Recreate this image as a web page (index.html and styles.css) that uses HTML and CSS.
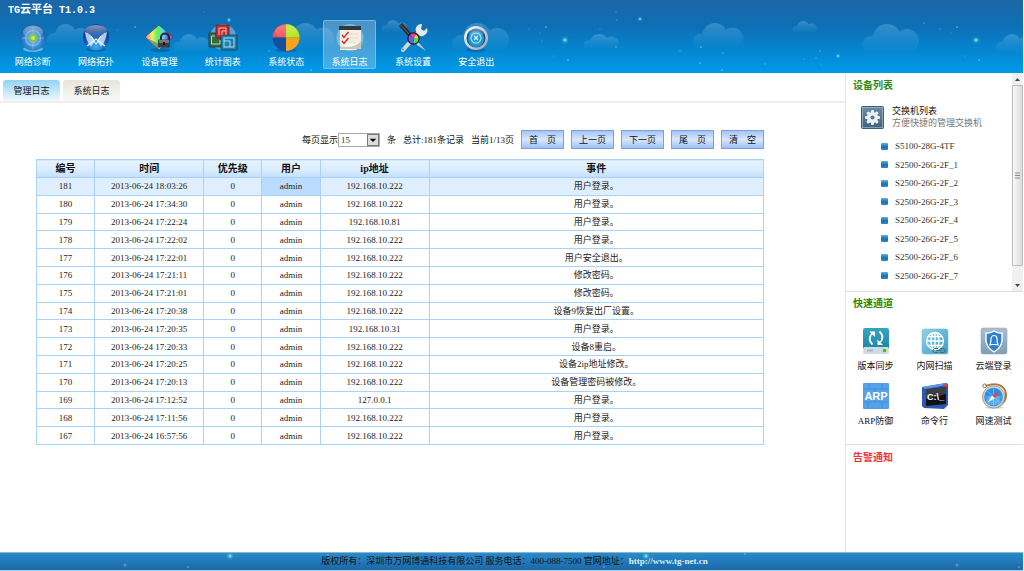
FILE: index.html
```html
<!DOCTYPE html>
<html lang="zh-CN">
<head>
<meta charset="utf-8">
<title>TG云平台</title>
<link rel="stylesheet" href="styles.css">
</head>
<body>
<svg class="defs" aria-hidden="true">
  <defs>
    <linearGradient id="gCloud" x1="0" y1="0" x2="0" y2="1"><stop offset="0" stop-color="#8cc8f0" stop-opacity=".34"/><stop offset=".9" stop-color="#6cc0f4" stop-opacity="0"/></linearGradient>
    <radialGradient id="gGlow"><stop offset="0" stop-color="#7cf0ec"/><stop offset=".3" stop-color="#3ccbe8" stop-opacity=".6"/><stop offset="1" stop-color="#3ccbe8" stop-opacity="0"/></radialGradient>
    <radialGradient id="gBall" cx=".5" cy=".6" r=".6"><stop offset="0" stop-color="#7fc6ee"/><stop offset=".6" stop-color="#2f80cc"/><stop offset="1" stop-color="#1a569c"/></radialGradient>
    <radialGradient id="gDeep" cx=".5" cy=".85" r=".8"><stop offset="0" stop-color="#39b0f4"/><stop offset=".55" stop-color="#1257b8"/><stop offset="1" stop-color="#0a2a72"/></radialGradient>
    <linearGradient id="gShine" x1="0" y1="0" x2="0" y2="1"><stop offset="0" stop-color="#fff" stop-opacity=".75"/><stop offset="1" stop-color="#fff" stop-opacity=".05"/></linearGradient>
    <linearGradient id="gRainbow" x1="0" y1="0" x2="1" y2="0"><stop offset="0" stop-color="#f46ad0"/><stop offset=".25" stop-color="#f0f060"/><stop offset=".45" stop-color="#5ef060"/><stop offset=".65" stop-color="#58d8f4"/><stop offset=".8" stop-color="#6a5cf0"/><stop offset="1" stop-color="#f03c9c"/></linearGradient>
    <linearGradient id="gTeal" x1="0" y1="0" x2="0" y2="1"><stop offset="0" stop-color="#35a5c6"/><stop offset="1" stop-color="#1c86a8"/></linearGradient>
    <linearGradient id="gSky" x1="0" y1="0" x2="1" y2="1"><stop offset="0" stop-color="#8fd4ec"/><stop offset="1" stop-color="#3a9cc4"/></linearGradient>
    <linearGradient id="gSteel" x1="0" y1="0" x2="0" y2="1"><stop offset="0" stop-color="#6f8ba3"/><stop offset="1" stop-color="#3f617c"/></linearGradient>
    <linearGradient id="gSilver" x1="0" y1="0" x2="0" y2="1"><stop offset="0" stop-color="#a9bfcf"/><stop offset="1" stop-color="#7f9db3"/></linearGradient>
    <linearGradient id="gMetal" x1="0" y1="0" x2="1" y2="1"><stop offset="0" stop-color="#fff"/><stop offset="1" stop-color="#9aa3ab"/></linearGradient>
    <path id="cloud" d="M1 21a9 9 0 0 1 18 0a9 9 0 0 1-18 0ZM12 14a14 14 0 0 1 28 0a14 14 0 0 1-28 0ZM34 17a12 12 0 0 1 24 0a12 12 0 0 1-24 0ZM8 18H50V32H8Z" fill="url(#gCloud)"/>
    <g id="star"><circle r="4" fill="url(#gGlow)"/><path d="M0-1.500V1.500M-1.500 0H1.500" stroke="#b4f8f0" stroke-width=".7" opacity=".8"/></g>
  </defs>
</svg>

<header class="top">
  <svg class="sky" viewBox="0 0 1024 73" preserveAspectRatio="xMinYMin slice" aria-hidden="true">
    <use href="#cloud" transform="translate(46 24) scale(.75)"/>
    <use href="#cloud" transform="translate(172 34) scale(.65)"/>
    <use href="#cloud" transform="translate(282 23) scale(.9)"/>
    <use href="#cloud" transform="translate(381 20) scale(.45)"/>
    <use href="#cloud" transform="translate(451 23) scale(1)"/>
    <use href="#cloud" transform="translate(583 34) scale(.62 .52)"/>
    <use href="#cloud" transform="translate(692 23) scale(.88)"/>
    <use href="#cloud" transform="translate(792 21) scale(.43)"/>
    <use href="#cloud" transform="translate(861 24) scale(1)"/>
    <use href="#cloud" transform="translate(995 34) scale(.65)"/>
    <use href="#star" x="565" y="40"/><use href="#star" x="976" y="40"/>
    <use href="#star" transform="translate(229 20) scale(.7)"/><use href="#star" transform="translate(640 19) scale(.7)"/>
    <use href="#star" transform="translate(838 56) scale(.7)"/><use href="#star" transform="translate(428 58) scale(.7)"/>
    <g fill="#8fd6f4" opacity=".55">
      <circle cx="135" cy="27" r=".9"/><circle cx="117" cy="30" r=".6"/><circle cx="204" cy="12" r=".6"/><circle cx="269" cy="51" r=".8"/><circle cx="311" cy="70" r=".9"/>
      <circle cx="546" cy="27" r=".9"/><circle cx="529" cy="29" r=".6"/><circle cx="540" cy="33" r=".6"/><circle cx="542" cy="41" r=".6"/><circle cx="568" cy="60" r="1"/><circle cx="554" cy="56" r=".6"/>
      <circle cx="616" cy="12" r=".7"/><circle cx="617" cy="20" r=".7"/><circle cx="600" cy="29" r=".6"/><circle cx="616" cy="47" r=".8"/><circle cx="680" cy="51" r=".7"/><circle cx="701" cy="47" r=".9"/><circle cx="700" cy="63" r=".9"/><circle cx="723" cy="53" r=".8"/><circle cx="722" cy="70" r=".9"/>
      <circle cx="765" cy="64" r=".7"/><circle cx="820" cy="51" r=".8"/><circle cx="804" cy="59" r=".7"/><circle cx="816" cy="58" r=".7"/><circle cx="821" cy="65" r=".6"/>
      <circle cx="924" cy="23" r=".8"/><circle cx="940" cy="29" r=".7"/><circle cx="957" cy="27" r=".9"/><circle cx="951" cy="33" r=".6"/><circle cx="979" cy="60" r=".9"/><circle cx="965" cy="56" r=".6"/>
    </g>
  </svg>
  <h1 class="brand"><span class="latin">TG</span>云平台<span class="latin"> T1.0.3</span></h1>
  <nav class="nav">
    <a class="nav-item" href="#">
      <svg viewBox="0 0 28 28"><ellipse cx="14" cy="25" rx="10" ry="3" fill="#7fc0ea" opacity=".8"/><circle cx="14" cy="13.500" r="13" fill="url(#gBall)"/><ellipse cx="14" cy="8" rx="10" ry="6.500" fill="url(#gShine)" opacity=".6"/><circle cx="14" cy="14" r="7.500" fill="none" stroke="#a9d0e4" stroke-width="1.200" opacity=".6"/><path d="M14 3V25M3 14H25" stroke="#a9d0e4" opacity=".5"/><circle cx="14" cy="14" r="4" fill="#8cc63a"/><circle cx="14" cy="14" r="2" fill="#c8e860"/></svg>
      <span>网络诊断</span></a>
    <a class="nav-item" href="#">
      <svg viewBox="0 0 28 28"><ellipse cx="14" cy="25.500" rx="10" ry="2" fill="#0a4f94" opacity=".6"/><circle cx="14" cy="13.500" r="13" fill="url(#gDeep)"/><ellipse cx="14" cy="7" rx="11" ry="6" fill="url(#gShine)" opacity=".7"/><path d="M3 8Q9 10 13 17L9 23Q4 17 3 8ZM25 8Q19 10 15 17L19 23Q24 17 25 8Z" fill="#cfe2f2" opacity=".85"/><path d="M5 22L14 15L23 22M9 12L14 20L19 12" fill="none" stroke="#eef6fc" stroke-width="1.100"/></svg>
      <span>网络拓扑</span></a>
    <a class="nav-item" href="#">
      <svg viewBox="0 0 28 28"><ellipse cx="15" cy="26" rx="10" ry="2" fill="#0a4f94" opacity=".5"/><path d="M14 1L28 13L14 26L0 13Z" fill="url(#gRainbow)" stroke="#444b54" stroke-width=".8"/><path d="M2 14L14 26L14 20Z" fill="#68707c" opacity=".65"/><path d="M16 16V13.500a4 4 0 0 1 8 0V16" fill="none" stroke="#28282c" stroke-width="2"/><rect x="13" y="15.500" width="12" height="8" rx="1" fill="#3c3c42"/><rect x="14" y="16" width="10" height="3" fill="#77777e"/><path d="M19 18v3" stroke="#000" stroke-width="1.500"/></svg>
      <span>设备管理</span></a>
    <a class="nav-item" href="#">
      <svg viewBox="0 0 28 28"><circle cx="14" cy="13" r="13" fill="#a8d0ec" opacity=".5"/><g stroke="#1c2c30" stroke-width=".7"><rect x="0" y="9" width="14" height="14" rx="1" fill="#356c3e"/><rect x="7" y="1" width="13" height="13" rx="1" fill="#d8261e"/><rect x="12" y="11" width="16" height="15" rx="1" fill="#1882b8"/></g><g fill="none" stroke="#d6e8ea" stroke-width="1" opacity=".85"><path d="M2.500 20V12H6M2.500 20H11V16"/><path d="M10 11V4H17V11M13 11V7H17"/><rect x="15" y="14" width="10" height="9"/><path d="M15 17H21V23"/></g></svg>
      <span>统计图表</span></a>
    <a class="nav-item" href="#">
      <svg viewBox="0 0 28 28"><ellipse cx="14" cy="26" rx="11" ry="2" fill="#0a4f94" opacity=".5"/><path d="M14 13.500V0A13.500 13.500 0 0 0 .5 13.500Z" fill="#f2525c"/><path d="M14 13.500V0A13.500 13.500 0 0 1 27.500 13.500Z" fill="#b6e61c"/><path d="M14 13.500V27A13.500 13.500 0 0 1 .5 13.500Z" fill="#14509e"/><path d="M14 13.500V27A13.500 13.500 0 0 0 27.500 13.500Z" fill="#f6a41e"/><ellipse cx="14" cy="7.500" rx="11" ry="6.500" fill="url(#gShine)" opacity=".35"/></svg>
      <span>系统状态</span></a>
    <a class="nav-item active" href="#">
      <svg viewBox="0 0 28 28"><circle cx="14" cy="13.500" r="13.500" fill="#8fcbe6" opacity=".7"/><path d="M4 5H25V21L20 26H4Z" fill="#f4efe2"/><path d="M4 22Q17 25 25 17V25H4Z" fill="#cfc8b8"/><path d="M4 22Q17 25 25 17L20 20Z" fill="#fff"/><rect x="3" y="2" width="22" height="4" fill="#33383e"/><path d="M13 10H22M13 14H22M13 18H19" stroke="#e2dccb"/><path d="M6 11L8 13.500L12.500 8M6 17L8 19.500L12.500 14" fill="none" stroke="#d8281e" stroke-width="1.400"/></svg>
      <span>系统日志</span></a>
    <a class="nav-item" href="#">
      <svg viewBox="0 0 28 28"><path d="M4 26L20 8" stroke="#d4d8dc" stroke-width="4" stroke-linecap="round"/><path d="M18 9a5.500 5.500 0 0 1 5-9l-1 5 3 2 3-3a6 6 0 0 1-7 8Z" fill="#e8ebee"/><path d="M0 2L3-1L13 10L10 13Z" fill="#28292c"/><path d="M1.500.8L11.500 11.500" stroke="#6d7074"/><path d="M15 15L20 19L27 27L18 21Z" fill="#c4ccd4"/><circle cx="4" cy="25.500" r="1" fill="#67829a"/><circle cx="14.500" cy="14.500" r="6.200" fill="#1d1d20"/><path d="M14.500 14.500L11 11A5 5 0 0 1 17 10.500Z" fill="#f43c9c"/><path d="M14.500 14.500L17 10.500A5 5 0 0 1 19.500 15Z" fill="#f4d238"/><path d="M14.500 14.500L19.500 15A5 5 0 0 1 15 19.500Z" fill="#3ce070"/><path d="M14.500 14.500L15 19.500A5 5 0 0 1 11 11Z" fill="#6a5cf0"/></svg>
      <span>系统设置</span></a>
    <a class="nav-item" href="#">
      <svg viewBox="0 0 28 28"><ellipse cx="14" cy="26" rx="10" ry="2" fill="#0a4f94" opacity=".5"/><circle cx="14" cy="14" r="12" fill="url(#gMetal)"/><circle cx="14" cy="14" r="9.500" fill="#0e4f92"/><circle cx="14" cy="15" r="8" fill="#2496d2"/><ellipse cx="14" cy="9" rx="7.500" ry="4.500" fill="url(#gShine)" opacity=".5"/><circle cx="14" cy="14" r="5" fill="none" stroke="#a8ecff" stroke-width="1.100"/><path d="M12 12L16 16M16 12L12 16" stroke="#d8faff" stroke-width="1.200"/></svg>
      <span>安全退出</span></a>
  </nav>
</header>

<div class="body">
  <main class="main">
    <div class="tabs">
      <a class="tab current" href="#">管理日志</a>
      <a class="tab" href="#">系统日志</a>
    </div>
    <section class="content">
      <form class="pager">
        <label class="size"><span>每页显示</span>
          <span class="pick"><select><option>15</option><option>30</option></select>
            <svg class="drop" viewBox="0 0 12 12" aria-hidden="true"><path d="M2 4.500H10L6 8.500Z" fill="#000"/></svg></span>
        </label>
        <span>条</span><span>总计:181条记录</span><span>当前1/13页</span>
        <div class="buttons">
          <button type="button">首&emsp;页</button>
          <button type="button">上一页</button>
          <button type="button">下一页</button>
          <button type="button">尾&emsp;页</button>
          <button type="button">清&emsp;空</button>
        </div>
      </form>
      <table class="log">
        <thead><tr><th class="narrow">编号</th><th class="wide">时间</th><th class="narrow">优先级</th><th class="narrow">用户</th><th class="wide">ip地址</th><th>事件</th></tr></thead>
        <tbody>
          <tr class="hot"><td>181</td><td>2013-06-24 18:03:26</td><td>0</td><td class="hit">admin</td><td>192.168.10.222</td><td>用户登录。</td></tr>
          <tr><td>180</td><td>2013-06-24 17:34:30</td><td>0</td><td>admin</td><td>192.168.10.222</td><td>用户登录。</td></tr>
          <tr><td>179</td><td>2013-06-24 17:22:24</td><td>0</td><td>admin</td><td>192.168.10.81</td><td>用户登录。</td></tr>
          <tr><td>178</td><td>2013-06-24 17:22:02</td><td>0</td><td>admin</td><td>192.168.10.222</td><td>用户登录。</td></tr>
          <tr><td>177</td><td>2013-06-24 17:22:01</td><td>0</td><td>admin</td><td>192.168.10.222</td><td>用户安全退出。</td></tr>
          <tr><td>176</td><td>2013-06-24 17:21:11</td><td>0</td><td>admin</td><td>192.168.10.222</td><td>修改密码。</td></tr>
          <tr><td>175</td><td>2013-06-24 17:21:01</td><td>0</td><td>admin</td><td>192.168.10.222</td><td>修改密码。</td></tr>
          <tr><td>174</td><td>2013-06-24 17:20:38</td><td>0</td><td>admin</td><td>192.168.10.222</td><td>设备9恢复出厂设置。</td></tr>
          <tr><td>173</td><td>2013-06-24 17:20:35</td><td>0</td><td>admin</td><td>192.168.10.31</td><td>用户登录。</td></tr>
          <tr><td>172</td><td>2013-06-24 17:20:33</td><td>0</td><td>admin</td><td>192.168.10.222</td><td>设备8重启。</td></tr>
          <tr><td>171</td><td>2013-06-24 17:20:25</td><td>0</td><td>admin</td><td>192.168.10.222</td><td>设备2ip地址修改。</td></tr>
          <tr><td>170</td><td>2013-06-24 17:20:13</td><td>0</td><td>admin</td><td>192.168.10.222</td><td>设备管理密码被修改。</td></tr>
          <tr><td>169</td><td>2013-06-24 17:12:52</td><td>0</td><td>admin</td><td>127.0.0.1</td><td>用户登录。</td></tr>
          <tr><td>168</td><td>2013-06-24 17:11:56</td><td>0</td><td>admin</td><td>192.168.10.222</td><td>用户登录。</td></tr>
          <tr><td>167</td><td>2013-06-24 16:57:56</td><td>0</td><td>admin</td><td>192.168.10.222</td><td>用户登录。</td></tr>
        </tbody>
      </table>
    </section>
  </main>

  <aside class="side">
    <section class="devices">
      <div class="device-pane">
        <h2>设备列表</h2>
        <div class="group">
          <svg viewBox="0 0 23 23" aria-hidden="true"><rect x=".5" y=".5" width="22" height="22" rx="1" fill="url(#gSteel)" stroke="#3f5d78"/><rect x="1.500" y="1.500" width="20" height="20" fill="none" stroke="#a4bccd" opacity=".7"/><g fill="#e9f0f5"><circle cx="11.500" cy="11.500" r="5.500"/><g id="teeth"><rect x="10" y="4" width="3" height="15" rx="1"/><rect x="4" y="10" width="15" height="3" rx="1"/></g><use href="#teeth" transform="rotate(45 11.500 11.500)"/></g><circle cx="11.500" cy="11.500" r="2" fill="#59788f"/></svg>
          <p class="group-name">交换机列表</p>
          <p class="group-note">方便快捷的管理交换机</p>
        </div>
        <ul class="device-list">
          <li><a href="#">S5100-28G-4TF</a></li>
          <li><a href="#">S2500-26G-2F_1</a></li>
          <li><a href="#">S2500-26G-2F_2</a></li>
          <li><a href="#">S2500-26G-2F_3</a></li>
          <li><a href="#">S2500-26G-2F_4</a></li>
          <li><a href="#">S2500-26G-2F_5</a></li>
          <li><a href="#">S2500-26G-2F_6</a></li>
          <li><a href="#">S2500-26G-2F_7</a></li>
        </ul>
      </div>
      <div class="scroll" aria-hidden="true">
        <svg class="arrow" viewBox="0 0 11 12"><path d="M3 8H8L5.500 5Z" fill="#444"/></svg>
        <div class="thumb"><svg viewBox="0 0 5 7"><path d="M0 1H5M0 3.500H5M0 6H5" stroke="#888"/></svg></div>
        <svg class="arrow" viewBox="0 0 11 12"><path d="M3 5H8L5.500 8Z" fill="#444"/></svg>
      </div>
    </section>

    <section class="quick">
      <h2>快速通道</h2>
      <div class="tiles">
        <a class="tile" href="#"><svg viewBox="0 0 26 26"><rect width="26" height="21" rx="2" fill="url(#gTeal)"/><path d="M1 19H25L26 24a2 2 0 0 1-2 2H2a2 2 0 0 1-2-2Z" fill="#cfdbe2"/><path d="M5 21.500v2M7 21.500v2M9 21.500v2" stroke="#8195a3"/><circle cx="21.500" cy="22.500" r="1.800" fill="#4cb81e"/><path d="M9.500 16.500Q4 11 9 5.500M16.500 3.500Q22 9 17 14.500" fill="none" stroke="#fff" stroke-width="1.800"/><path d="M6.500 3.500H12V9ZM14.500 11.500V17H20Z" fill="#fff"/></svg><span>版本同步</span></a>
        <a class="tile" href="#"><svg viewBox="0 0 26 26"><rect y="1" width="26" height="25" rx="2" fill="url(#gSky)" stroke="#78bcd4" stroke-width=".6"/><g fill="none" stroke="#fff" stroke-width="1.300"><circle cx="13" cy="13" r="8.500"/><ellipse cx="13" cy="13" rx="4" ry="8.500"/><path d="M13 4.500V21.500M4.500 13H21.500M6 8.500H20M6 17.500H20"/></g><path d="M11 22.500a2 2 0 0 1 2-2h3M14 22.500h6M18 20.500h3a2 2 0 0 1 0 4h-3M16 24.500h-3a2 2 0 0 1-2-2" fill="none" stroke="#55646c" stroke-width="1"/></svg><span>内网扫描</span></a>
        <a class="tile" href="#"><svg viewBox="0 0 26 26"><rect width="26" height="26" rx="2" fill="url(#gSilver)" stroke="#8aa3b5" stroke-width=".5"/><path d="M13 3Q17 5.500 21 5V13Q20 20 13 24Q6 20 5 13V5Q9 5.500 13 3Z" fill="#2f7fd0" stroke="#fff" stroke-width="1.400"/><path d="M9 17Q10 14 10 11a3 3.500 0 0 1 6 0Q16 14 17 17L15 16.500H11Z" fill="none" stroke="#fff" stroke-width="1.200"/></svg><span>云端登录</span></a>
        <a class="tile" href="#"><svg viewBox="0 0 26 26"><rect width="26" height="26" rx="1" fill="#56a2e8"/><path d="M0 6H26M0 19H26M6 0V6M19 0V6M12 6V9M12 17V19M5 19V26M19 19V26" stroke="#3f8cd8" stroke-width=".8"/><text x="13" y="17" class="arp">ARP</text></svg><span>ARP防御</span></a>
        <a class="tile" href="#"><svg viewBox="0 0 26 26"><path d="M0 4L24 0Q26 0 26 2V22L22 26L2 25L0 23Z" fill="#2b57ae"/><path d="M0 4L24 0L25 2L3 6Z" fill="#5f95e4"/><path d="M4 6.500L24 4V21L4 23Z" fill="#101114"/><path d="M4 6.500L24 4V11L4 16Z" fill="#3c3e44"/><rect x="21" y="1.500" width="4" height="2.500" fill="#e0362c"/><text x="13.500" y="17" class="cmd">C:\_</text></svg><span>命令行</span></a>
        <a class="tile" href="#"><svg viewBox="0 0 26 28"><path d="M4 3Q20-2 25 8Q29 19 17 26" fill="none" stroke="#a87840" stroke-width="2"/><ellipse cx="13" cy="26.500" rx="10" ry="1.500" fill="#999" opacity=".4"/><circle cx="3" cy="3" r="2" fill="none" stroke="#8f6532"/><circle cx="12.500" cy="15" r="12" fill="#cfd4d8"/><circle cx="12.500" cy="15" r="12" fill="none" stroke="#9c8a6c" stroke-width=".8"/><circle cx="12.500" cy="15" r="10" fill="#2f8fe4"/><ellipse cx="12.500" cy="19" rx="8" ry="5" fill="#7fd0f8" opacity=".5"/><path d="M12.500 6V24M3.500 15H21.500M6 9L19 21" stroke="#a8d8f8" stroke-width=".6"/><path d="M19 9L14 16.500L11 13.500Z" fill="#e8402c"/><path d="M6 21L14 16.500L11 13.500Z" fill="#f4f8fc"/></svg><span>网速测试</span></a>
      </div>
    </section>

    <section class="alarm">
      <h2>告警通知</h2>
    </section>
  </aside>
</div>

<footer class="foot">
  <svg class="sky" viewBox="0 0 1024 17" preserveAspectRatio="xMinYMin slice" aria-hidden="true">
    <use href="#star" x="230" y="3"/><use href="#star" x="646" y="3"/>
    <g fill="#7cc8ee" opacity=".5"><circle cx="125" cy="12" r="1.500"/><circle cx="188" cy="14" r="1"/><circle cx="328" cy="2" r="1"/><circle cx="604" cy="14" r="1"/><circle cx="745" cy="1" r="1"/><circle cx="957" cy="12" r="1.500"/><circle cx="1019" cy="14" r="1"/></g>
  </svg>
  <p>版权所有：深圳市万网博通科技有限公司 服务电话：400-088-7500 官网地址：<a href="#">http://www.tg-net.cn</a></p>
</footer>
</body>
</html>
```

FILE: styles.css
```css
* { box-sizing: border-box; }

body {
  margin: 0;
  padding-right: 1px;
  min-height: 100vh;
  display: flex;
  flex-direction: column;
  background: #fff;
  color: #111;
  font: 9px/12px "Liberation Serif", "Noto Sans CJK SC", serif;
}

a { color: inherit; text-decoration: none; }
h1, h2, p, ul { margin: 0; padding: 0; }
svg { display: block; }
.defs { position: absolute; width: 0; height: 0; }

/* header */
.top {
  position: relative;
  height: 73px;
  overflow: hidden;
  background: linear-gradient(#1c66a6, #0d6fb5 35%, #0488d2 72%, #009be9);
  color: #fff;
}
.sky { position: absolute; left: 0; top: 0; width: 100%; height: 100%; }
.brand {
  position: relative;
  padding: 2px 0 0 8px;
  font-size: 11px;
  line-height: 14px;
  white-space: pre;
}
.latin { font-family: "Liberation Mono", monospace; font-size: 10px; }
.nav {
  position: relative;
  display: grid;
  grid-template-columns: repeat(8, 1fr);
  justify-items: center;
  width: 507px;
  margin: 2px 0 0 1px;
}
.nav-item {
  width: 53px;
  height: 49px;
  display: flex;
  flex-direction: column;
  align-items: center;
  gap: 4px;
  padding-top: 3px;
  border: 1px solid transparent;
  border-radius: 2px;
}
.nav-item svg { width: 28px; height: 28px; overflow: visible; }
.nav-item.active {
  background: rgba(190, 220, 240, 0.35);
  border-color: rgba(150, 205, 240, 0.6);
}

/* columns */
.body { flex: 1; display: flex; }
.main { flex: 1; min-width: 0; }
.side {
  width: 178px;
  flex: none;
  border-left: 1px solid #e4e4e4;
  display: flex;
  flex-direction: column;
}

/* tabs */
.tabs {
  display: flex;
  gap: 3px;
  padding: 7px 0 0 3px;
  border-bottom: 2px solid #eee;
}
.tab {
  width: 57px;
  padding: 5px 0 4px;
  text-align: center;
  border-radius: 3px 3px 0 0;
  background: linear-gradient(#e6e5dc, #f9f9f6);
}
.tab.current { background: linear-gradient(#93d3f3, #f0f9fe); }

/* log page */
.content { padding: 27px 81px 0 36px; }
.pager {
  display: flex;
  justify-content: flex-end;
  align-items: center;
  gap: 7px;
  white-space: nowrap;
}
.size { display: flex; align-items: center; }
.pick { position: relative; }
.pick select {
  display: block;
  appearance: none;
  width: 42px;
  height: 14px;
  padding: 0 2px;
  border: 1px solid #a8a8a8;
  border-radius: 0;
  background: #fff;
  color: #333;
  font: inherit;
}
.drop {
  position: absolute;
  right: 1px;
  top: 1px;
  width: 12px;
  height: 12px;
  background: #dcdcdc;
  border: 1px solid #777;
  pointer-events: none;
}
.buttons { display: flex; gap: 7px; }
.buttons button {
  width: 43px;
  height: 19px;
  padding: 0;
  border: 1px solid #7e9fdc;
  background: linear-gradient(#a3c4f8, #d9e7fc 50%, #9cc1fa);
  color: #111;
  font: inherit;
}

.log {
  width: 100%;
  height: 286px;
  margin-top: 10px;
  border-collapse: collapse;
  table-layout: fixed;
  text-align: center;
}
.log th, .log td { padding: 0; border: 1px solid #a9d2f8; }
.log th {
  height: 18px;
  background: linear-gradient(#e6f3ff, #dbedff 55%, #bfdfff);
  font-size: 10px;
}
.log td { color: #222; }
.narrow { width: 8%; }
.wide { width: 15%; }
.log .hot td { background: #dfefff; }
.log .hot .hit { background: #b9dcff; }

/* side panels */
.side h2 { font-size: 10px; line-height: 14px; color: #2c8a08; }
.devices { display: flex; height: 219px; border-bottom: 1px solid #ddd; }
.device-pane { flex: 1; padding: 6px 0 0 7px; }
.group {
  display: grid;
  grid-template-columns: 23px 1fr;
  column-gap: 8px;
  margin: 12px 0 0 8px;
  white-space: nowrap;
}
.group svg { grid-row: span 2; width: 23px; height: 23px; margin-top: 1px; }
.group-note { color: #777; }
.device-list {
  display: grid;
  grid-auto-rows: 1fr;
  align-items: center;
  height: 148px;
  margin: 8px 0 0 28px;
  list-style: none;
  color: #333;
}
.device-list li { display: flex; align-items: center; gap: 7px; }
.device-list li::before {
  content: "";
  width: 7px;
  height: 7px;
  border-radius: 1px;
  background: linear-gradient(#5ab4e4, #1a6fb0 55%, #2a8cc8);
}
.scroll {
  width: 11px;
  display: flex;
  flex-direction: column;
  background: #f0f0f0;
}
.arrow { width: 11px; height: 12px; }
.thumb {
  height: 181px;
  margin-bottom: auto;
  display: grid;
  place-items: center;
  border: 1px solid #bbb;
  border-radius: 1px;
  background: linear-gradient(90deg, #fafafa, #dcdcdc);
}
.thumb svg { width: 5px; height: 7px; }

.quick { padding: 5px 0 17px; border-bottom: 1px solid #ddd; }
.quick h2, .alarm h2 { padding-left: 7px; }
.tiles {
  display: grid;
  grid-template-columns: repeat(3, 1fr);
  row-gap: 11px;
  margin-top: 17px;
}
.tile {
  display: flex;
  flex-direction: column;
  align-items: center;
  gap: 6px;
}
.tile svg { width: 26px; height: 26px; overflow: visible; }
.arp { font: bold 11px "Liberation Sans", sans-serif; fill: #fff; text-anchor: middle; }
.cmd { font: bold 9px "Liberation Sans", sans-serif; fill: #fff; text-anchor: middle; }

.alarm { padding-top: 6px; }
.side .alarm h2 { color: #f2303c; }

/* footer */
.foot {
  position: relative;
  height: 19px;
  overflow: hidden;
  border-top: 1px solid #8ab4d2;
  border-bottom: 1px solid #a9cbe4;
  background: linear-gradient(#2a8ac8, #1c68a8);
  text-align: center;
}
.foot p { position: relative; padding: 2px 0 0 6px; }
.foot a { color: #d4f0fc; font-weight: bold; }
```
